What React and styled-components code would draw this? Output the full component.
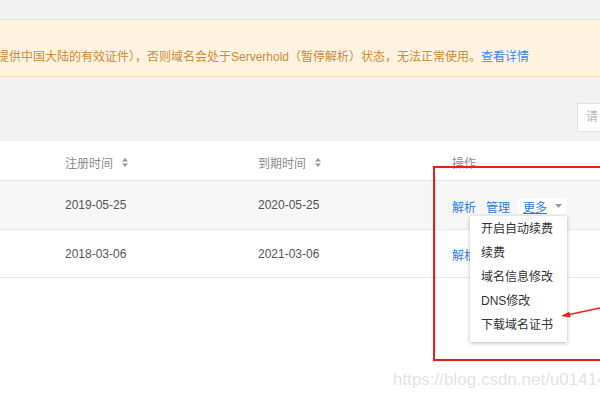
import React from "react";
import styled, { createGlobalStyle } from "styled-components";

const Global = createGlobalStyle`
  html, body { margin: 0; padding: 0; }
  body {
    width: 600px; height: 400px; overflow: hidden;
    background: #f2f2f2;
    font-family: "Liberation Sans", "Noto Sans CJK SC", Arial, sans-serif;
  }
`;

const Page = styled.div`
  position: relative;
  width: 600px;
  height: 400px;
  overflow: hidden;
  display: flex;
  flex-direction: column;
`;

const TopGap = styled.div`
  height: 19px;
  flex: none;
`;

const Banner = styled.div`
  flex: none;
  background: #fff3e0;
  border-top: 1px solid #fde1b5;
  border-bottom: 1px solid #fde1b5;
  padding: 28px 0 10px;
  line-height: 18px;
  font-size: 12px;
  color: #d18a35;
  white-space: nowrap;
`;

const BannerText = styled.span`
  display: inline-block;
  margin-left: -3px;
`;

const Link = styled.a`
  color: ${(p) => p.$color || "#2f7de1"};
  text-decoration: ${(p) => (p.$underline ? "underline" : "none")};
  cursor: pointer;
`;

const Toolbar = styled.div`
  flex: none;
  height: 64px;
  box-sizing: border-box;
  padding: 26px 0 0 577px;
  display: flex;
  align-items: flex-start;
`;

const SearchInput = styled.div`
  flex: none;
  width: 160px;
  height: 29px;
  box-sizing: border-box;
  background: #fff;
  border: 1px solid #e2e2e2;
  color: #b5b5b5;
  font-size: 12px;
  line-height: 27px;
  padding-left: 8px;
`;

const Table = styled.div`
  flex: 1;
  background: #fff;
`;

const Row = styled.div`
  display: grid;
  grid-template-columns: 65px 193px 194px 1fr;
  align-items: center;
  box-sizing: content-box;
  height: ${(p) => p.$h}px;
  padding-top: ${(p) => (p.$head ? 3 : 0)}px;
  background: ${(p) => (p.$hover ? "#f6f6f6" : "#fff")};
  border-bottom: 1px solid #e8e8e8;
  font-size: 12px;
  color: ${(p) => (p.$head ? "#8a8a8a" : "#555")};
`;

const Cell = styled.div`
  display: flex;
  align-items: center;
  white-space: nowrap;
`;

const SortIcon = styled.svg`
  margin-left: 9px;
  width: 6px;
  height: 9px;
`;

const Actions = styled.div`
  display: flex;
  align-items: center;
  gap: 8px;
  white-space: nowrap;
  padding-top: 2px;
`;

const FirstLink = styled(Link)`
  margin-right: 2px;
`;

const MoreBox = styled.div`
  display: flex;
  align-items: center;
  gap: 8px;
  background: #fff;
  height: 16px;
  padding: 0 4px 0 5px;
`;

const Caret = styled.svg`
  width: 7px;
  height: 4px;
`;

const Menu = styled.ul`
  position: absolute;
  left: 470px;
  top: 216px;
  width: 97px;
  margin: 0;
  padding: 1px 0 5px;
  list-style: none;
  background: #fff;
  box-shadow: 0 1px 4px rgba(0, 0, 0, 0.28);
  z-index: 3;
`;

const MenuItem = styled.li`
  height: 24px;
  line-height: 24px;
  padding-left: 11px;
  font-size: 12px;
  color: #333;
  white-space: nowrap;
`;

const RedBox = styled.div`
  position: absolute;
  left: 433px;
  top: 166px;
  width: 180px;
  height: 191px;
  border: 2px solid #f21b1b;
  z-index: 4;
  pointer-events: none;
`;

const Arrow = styled.svg`
  position: absolute;
  left: 555px;
  top: 298px;
  width: 45px;
  height: 25px;
  z-index: 5;
`;

const Watermark = styled.div`
  position: absolute;
  left: 393px;
  top: 370px;
  font-family: "Liberation Sans", Arial, sans-serif;
  font-size: 17px;
  color: #e3e3e3;
  white-space: nowrap;
  z-index: 6;
`;

const Sort = () => (
  <SortIcon viewBox="0 0 6 9">
    <polygon points="3,0 6,3.5 0,3.5" fill="#9a9a9a" />
    <polygon points="0,5.5 6,5.5 3,9" fill="#9a9a9a" />
  </SortIcon>
);

const rows = [
  { reg: "2019-05-25", exp: "2020-05-25", hover: true, h: 48 },
  { reg: "2018-03-06", exp: "2021-03-06", hover: false, h: 47 },
];

const menuItems = ["开启自动续费", "续费", "域名信息修改", "DNS修改", "下载域名证书"];

export default function App() {
  return (
    <>
      <Global />
      <Page>
        <TopGap />
        <Banner>
          <BannerText>
            提供中国大陆的有效证件），否则域名会处于Serverhold（暂停解析）状态，无法正常使用。
            <Link $color="#3b86f0">查看详情</Link>
          </BannerText>
        </Banner>
        <Toolbar>
          <SearchInput>请</SearchInput>
        </Toolbar>
        <Table>
          <Row $h={36} $head>
            <Cell />
            <Cell>
              注册时间
              <Sort />
            </Cell>
            <Cell>
              到期时间
              <Sort />
            </Cell>
            <Cell>操作</Cell>
          </Row>
          {rows.map((r) => (
            <Row key={r.reg} $h={r.h} $hover={r.hover}>
              <Cell />
              <Cell>{r.reg}</Cell>
              <Cell>{r.exp}</Cell>
              <Actions>
                <FirstLink>解析</FirstLink>
                <Link>管理</Link>
                <MoreBox>
                  <Link $underline>更多</Link>
                  <Caret viewBox="0 0 7 4">
                    <polygon points="0,0 7,0 3.5,4" fill="#9a9a9a" />
                  </Caret>
                </MoreBox>
              </Actions>
            </Row>
          ))}
        </Table>
        <Menu>
          {menuItems.map((m) => (
            <MenuItem key={m}>{m}</MenuItem>
          ))}
        </Menu>
        <RedBox />
        <Arrow viewBox="0 0 45 25">
          <line x1="45" y1="10" x2="12" y2="17" stroke="#f21b1b" strokeWidth="1.3" />
          <polygon points="6,18 15.5,19.6 14.3,13.8" fill="#f21b1b" />
        </Arrow>
        <Watermark>https://blog.csdn.net/u014142</Watermark>
      </Page>
    </>
  );
}
